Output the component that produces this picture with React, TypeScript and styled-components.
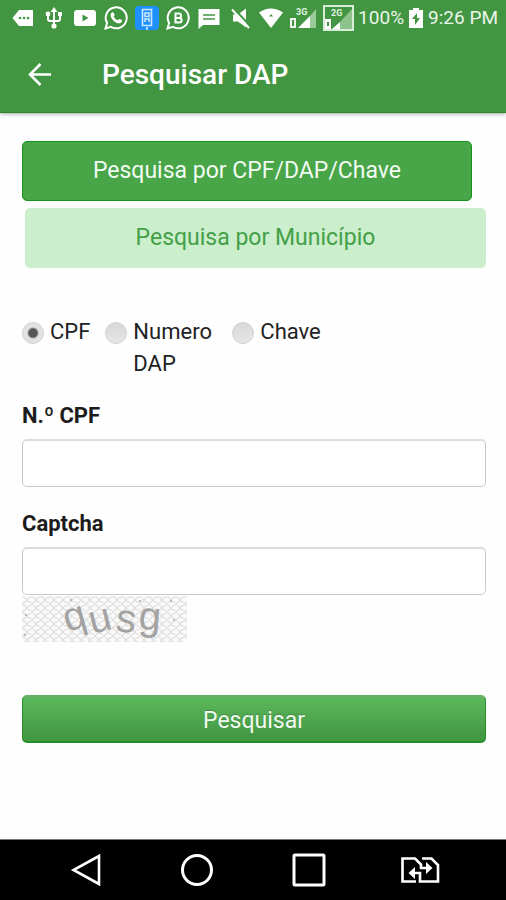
import React, { useState } from "react";
import styled, { createGlobalStyle, css } from "styled-components";

const GlobalStyle = createGlobalStyle`
  *, *::before, *::after { box-sizing: border-box; }
  body {
    margin: 0;
    background: #fefefe;
    color: #222;
    font-family: Roboto, "Liberation Sans", sans-serif;
    font-size: 22px;
    line-height: 32px;
  }
  button, input { font: inherit; }
`;

const Screen = styled.div`
  display: flex;
  flex-direction: column;
  min-height: 100vh;
`;

const Header = styled.header`
  background: #429642;
  color: #fff;
  border-bottom: 1px solid #2a862a;
  box-shadow: 0 1px 4px rgba(0, 0, 0, 0.35);
`;

const StatusBar = styled.div`
  display: flex;
  align-items: center;
  justify-content: space-between;
  height: 36px;
  padding: 0 8px 0 11px;
  font-size: 19px;
  line-height: 36px;
  color: #eaf5ea;
  white-space: nowrap;
`;

const IconStrip = styled.div`
  display: flex;
  align-items: center;
  gap: 7px;
`;

const PowerInfo = styled.div`
  display: flex;
  align-items: center;
  gap: 5px;
`;

const Glyph = styled.svg`
  display: block;
  flex: none;
`;

const AppBar = styled.div`
  display: flex;
  align-items: center;
  gap: 48px;
  height: 76px;
  padding: 2px 26px 0;
`;

const IconButton = styled.button`
  display: flex;
  align-items: center;
  justify-content: center;
  padding: 0;
  border: 0;
  background: none;
  color: inherit;
  cursor: pointer;
`;

const Title = styled.h1`
  margin: 0;
  font-size: 28px;
  font-weight: 500;
  line-height: 36px;
`;

const Form = styled.form`
  flex: 1;
  display: flex;
  flex-direction: column;
  padding: 28px 20px 32px 22px;
`;

const Modes = styled.div`
  display: flex;
  flex-direction: column;
  gap: 7px;
`;

const ModeButton = styled.button<{ $active: boolean }>`
  height: 60px;
  border-radius: 5px;
  font-size: 23px;
  cursor: pointer;
  ${({ $active }) =>
    $active
      ? css`
          margin-right: 14px;
          border: 1px solid #17931b;
          background: #48a548;
          color: #f2fbf2;
        `
      : css`
          margin-left: 3px;
          border: 0;
          background: #cbeecc;
          color: #43a047;
        `}
`;

const KeyTypes = styled.fieldset`
  display: flex;
  align-items: flex-start;
  gap: 15px;
  margin: 48px 0 0;
  padding: 0;
  border: 0;
`;

const Choice = styled.label<{ $narrow?: boolean }>`
  display: flex;
  align-items: flex-start;
  gap: 6px;
  max-width: ${({ $narrow }) => ($narrow ? "112px" : "none")};
`;

const Radio = styled.input`
  appearance: none;
  flex: none;
  width: 22px;
  height: 22px;
  margin: 6px 0 0;
  border: 1px solid #d2d2d2;
  border-radius: 50%;
  background: linear-gradient(#d8d8d8, #e6e6e6);
  &:checked {
    background: radial-gradient(circle, #555 0 4px, #e2e2e2 6px);
  }
`;

const Field = styled.div<{ $gap: number }>`
  display: flex;
  flex-direction: column;
  gap: 8px;
  margin-top: ${({ $gap }) => $gap}px;
`;

const FieldLabel = styled.label`
  font-weight: 700;
  line-height: 30px;
  color: #1c1c1c;
`;

const TextBox = styled.input`
  width: 100%;
  height: 48px;
  padding: 0 12px;
  border: 1px solid #c8c8c8;
  border-top: 2px solid #dcdcdc;
  border-radius: 5px;
  background: #fff;
`;

const CaptchaImage = styled.svg`
  display: block;
  margin-top: 1px;
  overflow: visible;
`;

const Submit = styled.button`
  height: 48px;
  margin-top: 53px;
  padding: 3px 0 0;
  border: 1px solid #259027;
  border-top: 2px solid #68ae68;
  border-bottom-width: 2px;
  border-radius: 5px;
  background: linear-gradient(#5cb85c, #419641);
  color: #f2fbf2;
  font-size: 23px;
  text-shadow: 0 -1px 1px rgba(0, 0, 0, 0.2);
  cursor: pointer;
`;

const SystemNav = styled.nav`
  display: grid;
  grid-template-columns: repeat(4, 1fr);
  justify-items: center;
  height: 61px;
  padding: 0 30px;
  border-top: 1px solid #777;
  background: #000;
  color: #fff;
`;

function StatusIcons() {
  return (
    <IconStrip aria-hidden="true">
      <Glyph width="24" height="24" viewBox="0 0 24 24">
        <path d="M8 4h14v16H8L1.500 12z" fill="#fff" />
        <g fill="#429642"><circle cx="9" cy="12" r="1.300" /><circle cx="13" cy="12" r="1.300" /><circle cx="17" cy="12" r="1.300" /></g>
      </Glyph>
      <Glyph width="24" height="24" viewBox="0 0 24 24" fill="none" stroke="#fff" strokeWidth="2">
        <path d="M12 5v14M6 9v4q0 2 2 2h8q2 0 2-2V9" />
        <path d="M12 1l3.500 5h-7zM16 6h4v4h-4z" fill="#fff" stroke="none" />
        <circle cx="6" cy="8" r="2.400" fill="#fff" stroke="none" />
        <circle cx="12" cy="20" r="2.600" fill="#fff" stroke="none" />
      </Glyph>
      <Glyph width="24" height="24" viewBox="0 0 24 24">
        <rect x="1" y="4" width="22" height="16" rx="3" fill="#fff" />
        <path d="M9.500 8.500v7l6-3.500z" fill="#429642" />
      </Glyph>
      <Glyph width="24" height="24" viewBox="0 0 24 24">
        <path d="M1.500 22.500l1.600-5.500A10.500 10.500 0 1 1 7 20.900z" fill="none" stroke="#fff" strokeWidth="2" />
        <path d="M8 6.500c.8-.5 1.500-.3 1.800.4l.8 1.900c.3.800-.9 1.500-.8 1.900 1 1.900 2.400 2.900 3.900 3.400.6.100 1.300-1.400 1.900-1.200l2.300 1.200c.7.500-.1 2.400-1.400 3-1.600.7-4 0-6.200-1.700S6.900 11.300 6.600 9.700C6.400 8.300 7.200 7.100 8 6.500z" fill="#fff" />
      </Glyph>
      <Glyph width="24" height="24" viewBox="0 0 24 24">
        <rect width="24" height="24" rx="4" fill="#1e90ff" />
        <path d="M7.500 3.500h9v16h-9zM12 21v3M10 7h4v3.500h-4zM10 16v-3h4v3" fill="none" stroke="#cce8ff" strokeWidth="1.600" />
      </Glyph>
      <Glyph width="24" height="24" viewBox="0 0 24 24" fill="none" stroke="#fff" strokeWidth="2">
        <path d="M1.500 22.500l1.600-5.500A10.500 10.500 0 1 1 7 20.900z" />
        <path d="M9.500 7.500h3.300a2.200 2.200 0 0 1 0 4.500H9.500zM9.500 12h3.800a2.300 2.300 0 0 1 0 4.600H9.500z" />
      </Glyph>
      <Glyph width="24" height="24" viewBox="0 0 24 24">
        <path d="M1.500 3h21v16H6l-4.500 4z" fill="#fff" />
        <path d="M6 9h12M6 13h12" stroke="#429642" strokeWidth="1.500" />
      </Glyph>
      <Glyph width="24" height="24" viewBox="0 0 24 24">
        <path d="M5 8.500h5l8-6v19l-8-6H5z" fill="#fff" />
        <path d="M5.500 2l17 18.500" stroke="#429642" strokeWidth="2" />
        <path d="M4 3.500l17 18.500" stroke="#fff" strokeWidth="2" />
      </Glyph>
      <Glyph width="24" height="24" viewBox="0 0 24 24">
        <path d="M0 6.500Q12-1.500 24 6.500L12 22z" fill="#fff" />
        <path d="M10 10.500l2-2.500 2 2.500z" fill="#429642" />
      </Glyph>
      <Glyph width="26" height="24" viewBox="0 0 26 24">
        <path d="M8 22L20 10v12z" fill="#fff" />
        <path d="M20 10l6-7v19h-6z" fill="#9acb9a" />
        <rect x="1" y="13" width="4" height="8" fill="none" stroke="#fff" strokeWidth="1.800" />
        <text x="6" y="9" fontSize="9" fontWeight="700" fill="#e4f3e4">3G</text>
      </Glyph>
      <Glyph width="31" height="26" viewBox="0 0 31 26">
        <path d="M1 1h29v24H1z" fill="none" stroke="#d8edd8" strokeWidth="2" />
        <path d="M17 17L29 4v20H17z" fill="#8dc48d" />
        <path d="M9 24l8-7v7z" fill="#fff" />
        <path d="M2 14h6v10H2z" fill="#fff" />
        <path d="M4 17h2v4H4z" fill="#429642" />
        <text x="8" y="11" fontSize="9" fontWeight="700" fill="#e4f3e4">2G</text>
      </Glyph>
    </IconStrip>
  );
}

function Captcha() {
  return (
    <CaptchaImage width="165" height="46" viewBox="0 0 165 46" role="img" aria-label="Captcha">
      <defs>
        <pattern id="mesh" width="9" height="8" patternUnits="userSpaceOnUse">
          <path d="M0 1q3-1 4 2t5 3M9 1Q6 2 5 4T0 8" fill="none" stroke="#dedede" strokeWidth="1.200" />
        </pattern>
      </defs>
      <rect width="165" height="46" fill="#fafafa" />
      <rect width="165" height="46" fill="url(#mesh)" />
      <g fill="#aaa">
        <circle cx="49" cy="4" r="1" /><circle cx="4" cy="19" r="1" /><circle cx="3" cy="39" r="1" />
        <circle cx="118" cy="5" r="1" /><circle cx="149" cy="5" r="1" /><circle cx="152" cy="24" r="1" />
      </g>
      <text
        x="45 70 93 116"
        y="36 38 35 33"
        rotate="-16 -14 6 4"
        fill="#a3a3a3"
        fontFamily="Liberation Sans, sans-serif"
        fontSize="40"
      >
        qusg
      </text>
    </CaptchaImage>
  );
}

export default function App() {
  const [byTown, setByTown] = useState(false);
  return (
    <>
      <GlobalStyle />
      <Screen>
        <Header>
          <StatusBar>
            <StatusIcons />
            <PowerInfo>
              <span>100%</span>
              <Glyph width="14" height="20" viewBox="0 0 14 20" aria-hidden="true">
                <path d="M4 0h6v2h4v18H0V2h4z" fill="#fff" />
                <path d="M8 5l-5 6h3v6l5-7H8z" fill="#429642" />
              </Glyph>
              <span>9:26 PM</span>
            </PowerInfo>
          </StatusBar>
          <AppBar>
            <IconButton type="button" aria-label="Voltar">
              <Glyph width="28" height="28" viewBox="0 0 28 28" fill="none" stroke="#fff" strokeWidth="2.600">
                <path d="M25 13.500H4.500M14.500 3L4 13.500 14.500 24" />
              </Glyph>
            </IconButton>
            <Title>Pesquisar DAP</Title>
          </AppBar>
        </Header>
        <Form onSubmit={(event) => event.preventDefault()}>
          <Modes>
            <ModeButton type="button" $active={!byTown} onClick={() => setByTown(false)}>
              Pesquisa por CPF/DAP/Chave
            </ModeButton>
            <ModeButton type="button" $active={byTown} onClick={() => setByTown(true)}>
              Pesquisa por Município
            </ModeButton>
          </Modes>
          <KeyTypes aria-label="Tipo de pesquisa">
            <Choice><Radio type="radio" name="key" defaultChecked />CPF</Choice>
            <Choice $narrow><Radio type="radio" name="key" />Numero DAP</Choice>
            <Choice><Radio type="radio" name="key" />Chave</Choice>
          </KeyTypes>
          <Field $gap={21}>
            <FieldLabel htmlFor="cpf">N.º CPF</FieldLabel>
            <TextBox id="cpf" type="text" />
          </Field>
          <Field $gap={22}>
            <FieldLabel htmlFor="captcha">Captcha</FieldLabel>
            <TextBox id="captcha" type="text" />
          </Field>
          <Captcha />
          <Submit type="submit">Pesquisar</Submit>
        </Form>
        <SystemNav aria-label="Sistema">
          <IconButton type="button" aria-label="Anterior">
            <Glyph width="32" height="34" viewBox="0 0 32 34" fill="none" stroke="#fff" strokeWidth="2.600">
              <path d="M29 3v28L3.500 17z" />
            </Glyph>
          </IconButton>
          <IconButton type="button" aria-label="Início">
            <Glyph width="34" height="34" viewBox="0 0 34 34" fill="none" stroke="#fff" strokeWidth="3">
              <circle cx="17" cy="17" r="14.500" />
            </Glyph>
          </IconButton>
          <IconButton type="button" aria-label="Recentes">
            <Glyph width="34" height="34" viewBox="0 0 34 34" fill="none" stroke="#fff" strokeWidth="3">
              <rect x="2" y="2" width="30" height="30" rx="1" />
            </Glyph>
          </IconButton>
          <IconButton type="button" aria-label="Trocar SIM">
            <Glyph width="40" height="28" viewBox="0 0 40 28" fill="none" stroke="#fff" strokeWidth="2.600">
              <path d="M16 25.500H2.500v-23H15l6 6v3.500h8M22 2.500h9.500l6.500 6.500v16.500H20V17h-8" />
              <path d="M26 6l6.500 6-6.500 6zM15 11l-6.500 6 6.500 6z" fill="#fff" stroke="none" />
            </Glyph>
          </IconButton>
        </SystemNav>
      </Screen>
    </>
  );
}
